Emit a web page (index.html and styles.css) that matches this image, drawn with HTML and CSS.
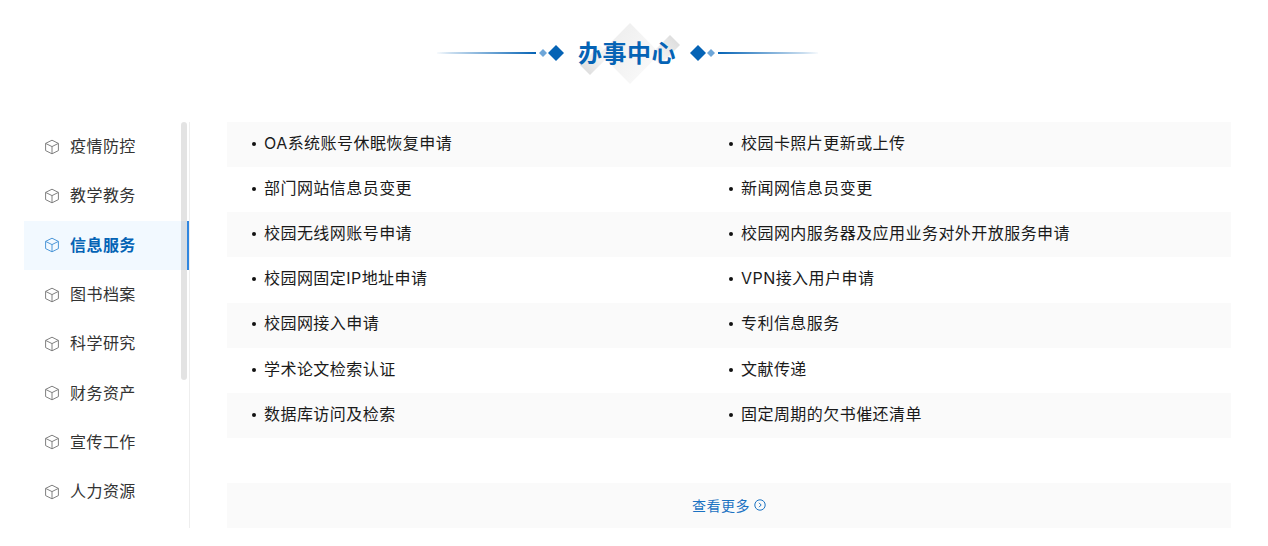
FILE: index.html
```html
<!DOCTYPE html>
<html lang="zh-CN">
<head>
<meta charset="utf-8">
<title>办事中心</title>
<link rel="stylesheet" href="styles.css">
</head>
<body>
<svg class="defs" width="0" height="0" aria-hidden="true">
  <defs>
    <symbol id="cube" viewBox="0 0 16 16">
      <path d="M8 1.200 14.400 4.400V11.600L8 14.800 1.600 11.600V4.400Z M1.600 4.400 8 7.600 14.400 4.400 M8 7.600V14.800" fill="none" stroke="currentColor" stroke-width="1" stroke-linejoin="round"/>
    </symbol>
    <linearGradient id="lineL" x1="0" x2="1" y1="0" y2="0"><stop offset="0" stop-color="#0563b5" stop-opacity=".03"/><stop offset=".15" stop-color="#0563b5" stop-opacity=".22"/><stop offset="1" stop-color="#0563b5"/></linearGradient>
    <linearGradient id="lineR" x1="1" x2="0" y1="0" y2="0"><stop offset="0" stop-color="#0563b5" stop-opacity=".03"/><stop offset=".15" stop-color="#0563b5" stop-opacity=".22"/><stop offset="1" stop-color="#0563b5"/></linearGradient>
    <linearGradient id="dia" x1="0" x2="1" y1="0.200" y2="0.800"><stop offset="0" stop-color="#ececec"/><stop offset="1" stop-color="#fbfbfb"/></linearGradient>
    <linearGradient id="diaR" x1="1" x2="0" y1="0" y2="1"><stop offset="0" stop-color="#d8d8d8"/><stop offset="1" stop-color="#ffffff"/></linearGradient>
    <linearGradient id="diaL" x1="0" x2="1" y1="1" y2="0"><stop offset="0" stop-color="#d8d8d8"/><stop offset=".6" stop-color="#f2f2f2"/><stop offset="1" stop-color="#ffffff"/></linearGradient>
  </defs>
</svg>
<div class="page">
  <header class="head">
    <svg class="orn" width="127" height="16" viewBox="0 0 127 16" aria-hidden="true">
      <rect x="0" y="7" width="99" height="2" fill="url(#lineL)"/>
      <path d="M106 4l4 4-4 4-4-4z" fill="#6ea6d8"/>
      <path d="M119 0l8 8-8 8-8-8z" fill="#0563b5"/>
    </svg>
    <h1 class="title">
      <svg class="title-bg" width="100" height="61" viewBox="0 0 100 61" aria-hidden="true">
        <path d="M0 42 10 52 30 32 20 22z" fill="url(#diaL)"/>
        <path d="M90 12 100 22 80 42 70 32z" fill="url(#diaR)"/>
        <path d="M50 0 80 30.500 50 61 20 30.500z" fill="url(#dia)"/>
      </svg>
      <span class="title-text">办事中心</span>
    </h1>
    <svg class="orn" width="128" height="16" viewBox="0 0 128 16" aria-hidden="true">
      <path d="M8 0l8 8-8 8-8-8z" fill="#0563b5"/>
      <path d="M21 4l4 4-4 4-4-4z" fill="#6ea6d8"/>
      <rect x="28" y="7" width="100" height="2" fill="url(#lineR)"/>
    </svg>
  </header>
  <div class="body">
    <nav class="side">
      <a class="side-item"><svg class="cube"><use href="#cube"/></svg><span class="label">疫情防控</span></a>
      <a class="side-item"><svg class="cube"><use href="#cube"/></svg><span class="label">教学教务</span></a>
      <a class="side-item is-active"><svg class="cube"><use href="#cube"/></svg><span class="label">信息服务</span></a>
      <a class="side-item"><svg class="cube"><use href="#cube"/></svg><span class="label">图书档案</span></a>
      <a class="side-item"><svg class="cube"><use href="#cube"/></svg><span class="label">科学研究</span></a>
      <a class="side-item"><svg class="cube"><use href="#cube"/></svg><span class="label">财务资产</span></a>
      <a class="side-item"><svg class="cube"><use href="#cube"/></svg><span class="label">宣传工作</span></a>
      <a class="side-item"><svg class="cube"><use href="#cube"/></svg><span class="label">人力资源</span></a>
      <span class="thumb"></span>
    </nav>
    <main class="main">
      <ul class="list">
        <li class="row"><span class="cell">OA系统账号休眠恢复申请</span><span class="cell">校园卡照片更新或上传</span></li>
        <li class="row"><span class="cell">部门网站信息员变更</span><span class="cell">新闻网信息员变更</span></li>
        <li class="row"><span class="cell">校园无线网账号申请</span><span class="cell">校园网内服务器及应用业务对外开放服务申请</span></li>
        <li class="row"><span class="cell">校园网固定IP地址申请</span><span class="cell">VPN接入用户申请</span></li>
        <li class="row"><span class="cell">校园网接入申请</span><span class="cell">专利信息服务</span></li>
        <li class="row"><span class="cell">学术论文检索认证</span><span class="cell">文献传递</span></li>
        <li class="row"><span class="cell">数据库访问及检索</span><span class="cell">固定周期的欠书催还清单</span></li>
      </ul>
      <a class="more"><span class="more-text">查看更多</span><svg class="more-icon" width="12" height="12" viewBox="0 0 12 12" aria-hidden="true"><circle cx="6" cy="6" r="5.200" fill="none" stroke="currentColor"/><path d="M5 3.800 7.200 6 5 8.200" fill="none" stroke="currentColor"/></svg></a>
    </main>
  </div>
</div>
</body>
</html>
```
FILE: styles.css
```css
* { box-sizing: border-box; }
html, body { margin: 0; padding: 0; background: #fff; }
body {
  font-family: Inter, "Noto Sans CJK SC", sans-serif;
  color: #222;
  height: 546px;
  overflow: hidden;
}
.defs { position: absolute; }
.page { width: 1207px; margin-left: 24px; }

.head {
  height: 122px;
  padding-bottom: 16px;
  display: flex;
  align-items: center;
  justify-content: center;
}
.orn { flex: none; }
.title {
  position: relative;
  margin: 0 14px;
  font-size: 24px;
  font-weight: 700;
  line-height: 40px;
  letter-spacing: .5px;
  color: #0563b5;
  white-space: nowrap;
}
.title-bg { position: absolute; left: 2px; top: -10px; }
.title-text { position: relative; top: 1px; }

.body { display: flex; align-items: flex-start; }
.side {
  position: relative;
  flex: none;
  width: 166px;
  height: 406px;
  border-right: 1px solid #eee;
  overflow: hidden;
}
.side-item {
  display: flex;
  align-items: center;
  height: 49.3px;
  padding-left: 20px;
  font-size: 16px;
  letter-spacing: .45px;
  color: #333;
}
.label { line-height: 22px; margin-bottom: 1px; }
.cube { width: 16px; height: 16px; margin-right: 10px; color: #808080; flex: none; }
.is-active {
  background: #f2f9ff;
  color: #0563b5;
  font-weight: 700;
  box-shadow: inset -2px 0 0 #2f86e0;
}
.is-active .cube { color: #4d97d8; }
.thumb {
  position: absolute;
  left: 157px;
  top: 0;
  width: 6px;
  height: 258px;
  border-radius: 3px;
  background: rgba(0, 0, 0, .11);
}

.main { flex: none; width: 1004px; margin-left: 37px; }
.list { list-style: none; margin: 0; padding: 0; }
.row {
  display: grid;
  grid-template-columns: 477px 1fr;
  height: 45.15px;
  padding: 0 0 3.4px 25px;
  align-items: center;
  font-size: 16px;
  line-height: 22px;
  letter-spacing: .45px;
  color: #1a1a1a;
}
.row:nth-child(odd) { background: #fafafa; }
.cell { display: flex; align-items: center; }
.cell::before {
  content: "";
  position: relative;
  top: 1px;
  width: 4px;
  height: 4px;
  margin-right: 8px;
  border-radius: 50%;
  background: #111;
  flex: none;
}
.more {
  display: flex;
  align-items: center;
  justify-content: center;
  height: 45px;
  margin-top: 45px;
  background: #fafafa;
  font-size: 14px;
  line-height: 20px;
  letter-spacing: .5px;
  color: #1a72c2;
}
.more-text { margin-top: 1px; }
.more-icon { margin-left: 4px; }
```
